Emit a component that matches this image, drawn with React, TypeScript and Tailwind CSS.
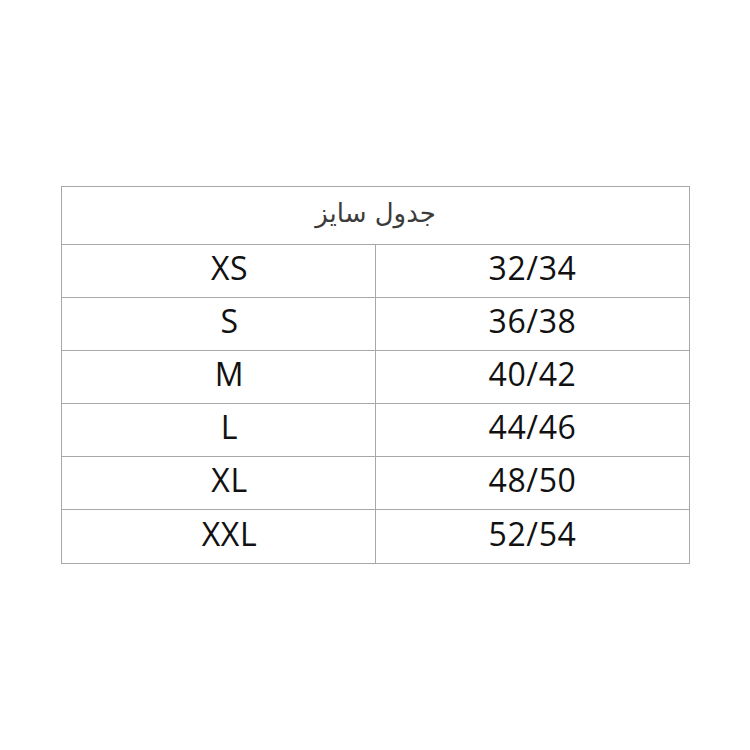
const ROWS = [
  ['XS', '32/34'],
  ['S', '36/38'],
  ['M', '40/42'],
  ['L', '44/46'],
  ['XL', '48/50'],
  ['XXL', '52/54'],
]

export default function App() {
  return (
    <div className="w-[750px] h-[750px] bg-white pt-[186px] pl-[61px]" style={{ fontFamily: '"Open Sans", "DejaVu Sans", sans-serif' }}>
      <div className="w-[629px] border border-[#a8a8a8]">
        {/* header */}
        <div className="h-[58px] border-b border-[#a8a8a8] flex items-center justify-center">
          <span dir="rtl" className="text-[26px] text-[#3c3c3c] pb-[4px]" style={{ fontFamily: '"DejaVu Sans", sans-serif' }}>
            جدول سایز
          </span>
        </div>

        {ROWS.map(([size, num], i) => (
          <div
            key={size}
            className={`grid grid-cols-[314px_1fr] h-[53px] ${i < ROWS.length - 1 ? 'border-b border-[#a8a8a8]' : ''}`}
          >
            <div className="border-r border-[#a8a8a8] flex items-center justify-center pl-[22px] pb-[6px] text-[32px] tracking-[0.6px] text-[#111] leading-none">
              {size}
            </div>
            <div className="flex items-center justify-center pb-[6px] text-[32px] tracking-[0.6px] text-[#111] leading-none">
              {num}
            </div>
          </div>
        ))}
      </div>
    </div>
  )
}
